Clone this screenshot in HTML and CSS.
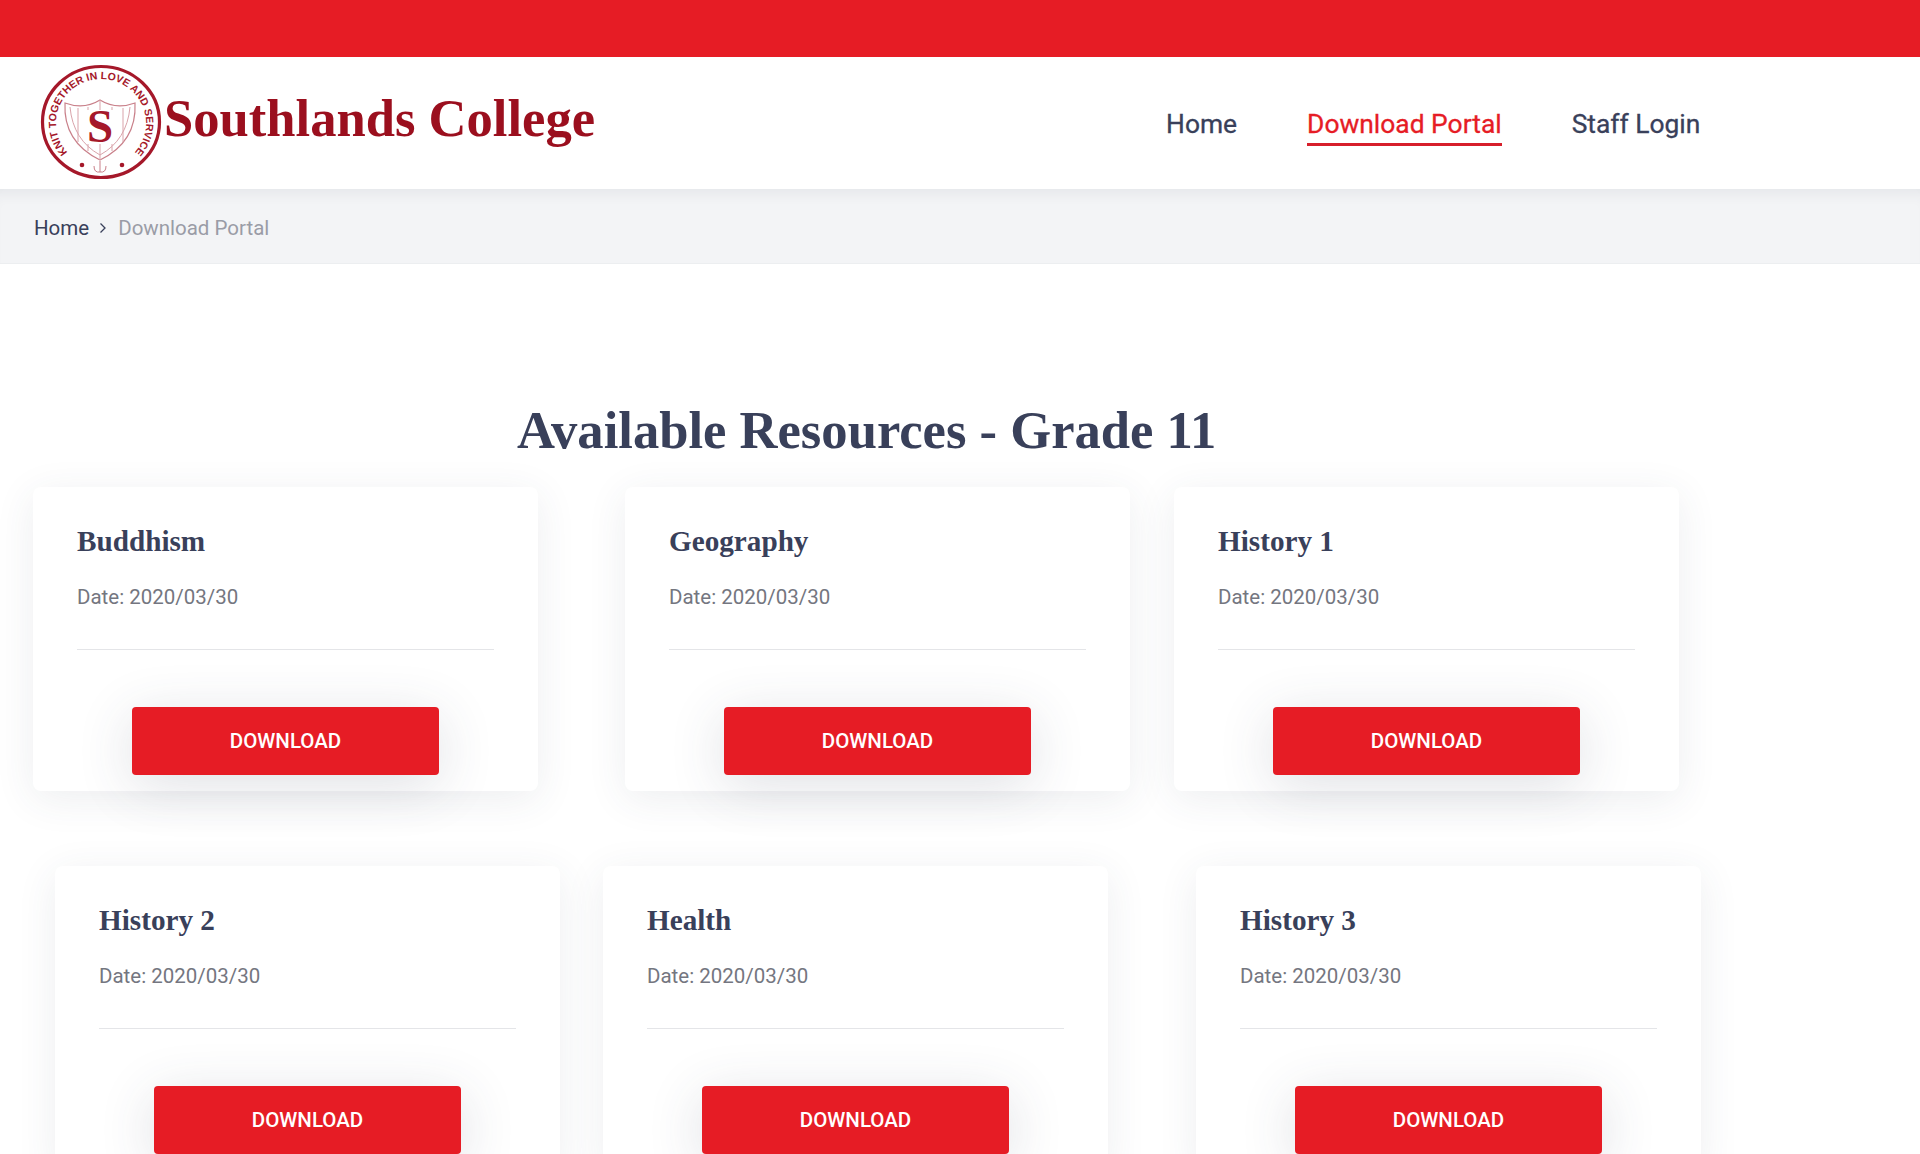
FILE: index.html
```
<!DOCTYPE html>
<html lang="en">
<head>
<meta charset="utf-8">
<title>Southlands College - Download Portal</title>
<link rel="stylesheet" href="styles.css">
</head>
<body>
<div class="topbar"></div>
<header class="header">
  <a class="brand" href="#">
    <svg class="logo" viewBox="0 0 122 116" preserveAspectRatio="none" aria-hidden="true">
      <defs>
        <path id="ringTop" d="M 28 89 A 45 44 0 1 1 94 89"/>
      </defs>
      <ellipse cx="61" cy="58" rx="58.500" ry="55.500" fill="#fff" stroke="#a5182a" stroke-width="3.200"/>
      <text class="logo-ring"><textPath href="#ringTop" startOffset="50%" text-anchor="middle" textLength="204" lengthAdjust="spacing">KNIT TOGETHER IN LOVE AND SERVICE</textPath></text>
      <path d="M25 39 Q44 46 60 36 Q76 46 95 39 Q97 78 60 96 Q23 78 25 39 Z" fill="#fff" stroke="#c9808a" stroke-width="1.200"/>
      <path d="M30 43 Q33 76 60 91 Q87 76 90 43" fill="none" stroke="#d9a3aa" stroke-width="1"/>
      <path d="M38 44 V78 M48 43 V87 M72 43 V87 M83 44 V78 M60 36 V96" fill="none" stroke="#d9a3aa" stroke-width="1"/>
      <rect x="47" y="46" width="26" height="34" fill="#fff"/>
      <text class="logo-s" x="60" y="78" text-anchor="middle">S</text>
      <circle cx="42" cy="101" r="2.300" fill="#a5182a"/>
      <circle cx="82" cy="101" r="2.300" fill="#a5182a"/>
      <path d="M60 97 V108 M54 102 Q54 109 60 108 Q66 109 66 102" fill="none" stroke="#c9808a" stroke-width="1"/>
    </svg>
    <span class="brand-name">Southlands College</span>
  </a>
  <nav class="nav">
    <a href="#" class="nav-link">Home</a>
    <a href="#" class="nav-link nav-link-active">Download Portal</a>
    <a href="#" class="nav-link">Staff Login</a>
  </nav>
</header>
<div class="crumbs">
  <a href="#" class="crumb-link">Home</a>
  <svg class="crumb-sep" viewBox="0 0 8 12" aria-hidden="true"><path d="M1.500 1.500 6 6l-4.500 4.500" fill="none" stroke="#39405a" stroke-width="1.300"/></svg>
  <span class="crumb-current">Download Portal</span>
</div>
<main class="content">
  <h1 class="page-title">Available Resources - Grade 11</h1>
  <section class="row row-one">
    <article class="card"><h2 class="card-title">Buddhism</h2><p class="card-date">Date: 2020/03/30</p><div class="card-rule"></div><a href="#" class="btn">DOWNLOAD</a></article>
    <article class="card"><h2 class="card-title">Geography</h2><p class="card-date">Date: 2020/03/30</p><div class="card-rule"></div><a href="#" class="btn">DOWNLOAD</a></article>
    <article class="card"><h2 class="card-title">History 1</h2><p class="card-date">Date: 2020/03/30</p><div class="card-rule"></div><a href="#" class="btn">DOWNLOAD</a></article>
  </section>
  <section class="row row-two">
    <article class="card"><h2 class="card-title">History 2</h2><p class="card-date">Date: 2020/03/30</p><div class="card-rule"></div><a href="#" class="btn">DOWNLOAD</a></article>
    <article class="card"><h2 class="card-title">Health</h2><p class="card-date">Date: 2020/03/30</p><div class="card-rule"></div><a href="#" class="btn">DOWNLOAD</a></article>
    <article class="card"><h2 class="card-title">History 3</h2><p class="card-date">Date: 2020/03/30</p><div class="card-rule"></div><a href="#" class="btn">DOWNLOAD</a></article>
  </section>
</main>
</body>
</html>
```
FILE: styles.css
```
* { box-sizing: border-box; }
html, body { margin: 0; height: 1154px; overflow: hidden; background: #fff; }
body { font-family: Roboto, "Liberation Sans", sans-serif; color: #39405a; }
a { text-decoration: none; color: inherit; }

.topbar { height: 57px; background: #e61c25; }

.header { height: 132px; display: flex; align-items: flex-start; padding-left: 40px; }
.brand { display: flex; align-items: flex-start; padding-top: 7px; }
.logo { width: 122px; height: 116px; flex: none; }
.logo-ring { font: bold 10.500px "Liberation Sans", sans-serif; fill: #a5182a; }
.logo-s { font: bold 47px "Liberation Serif", serif; fill: #a5182a; }
.brand-name { font: bold 52.600px/1 "Liberation Serif", serif; color: #9b0f1e; margin: 27.500px 0 0 2px; white-space: nowrap; }

.nav { display: flex; gap: 70px; margin-left: 571px; padding-top: 52px; }
.nav-link { font-size: 26.400px; line-height: 31px; padding-bottom: 3px; border-bottom: 3px solid transparent; -webkit-text-stroke: .3px currentColor; }
.nav-link-active { color: #e61c25; border-bottom-color: #d71f2b; }

.crumbs { height: 75px; display: flex; align-items: center; padding: 3px 0 0 34px; gap: 10px; background: #f3f4f6; border-bottom: 1px solid #eceef0; font-size: 20.500px; box-shadow: inset 0 14px 14px -10px rgba(57,64,90,.08); }
.crumb-sep { width: 8px; height: 12px; }
.crumb-current { color: #9a9ca6; margin-left: 1px; }

.content { padding-top: 134px; }
.page-title { font: bold 52.600px/64px "Liberation Serif", serif; margin: 0 0 25px 517px; color: #39405a; white-space: nowrap; }

.row { display: flex; margin-bottom: 75px; }
.row-one { padding-left: 33px; }
.row-one .card:nth-child(2) { margin-left: 87px; }
.row-one .card:nth-child(3) { margin-left: 44px; }
.row-two { padding-left: 55px; }
.row-two .card:nth-child(2) { margin-left: 43px; }
.row-two .card:nth-child(3) { margin-left: 88px; }

.card { width: 505px; height: 304px; flex: none; background: #fff; border-radius: 8px; padding: 38px 44px 0; box-shadow: 0 8px 40px rgba(57,64,90,.09); display: flex; flex-direction: column; }
.card-title { font: bold 29.200px/32px "Liberation Serif", serif; color: #39405a; margin: 0; }
.card-date { margin: 28px 0 0; font-size: 20.500px; line-height: 24px; color: #747680; }
.card-rule { height: 1px; background: #e4e5e8; margin-top: 40px; }
.btn { align-self: center; width: 307px; height: 68px; margin-top: 57px; display: flex; align-items: center; justify-content: center; background: #e61c25; color: #fff; font-size: 20.500px; font-weight: 500; border-radius: 4px; box-shadow: 0 10px 55px rgba(57,64,90,.16); }
```
